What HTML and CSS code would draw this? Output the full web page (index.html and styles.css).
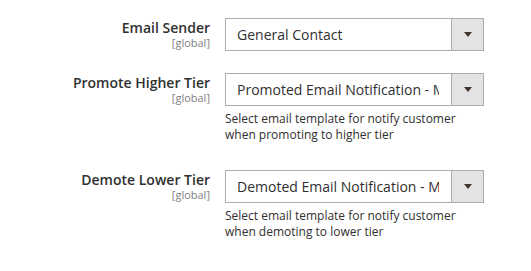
FILE: index.html
```html
<!DOCTYPE html>
<html>
<head>
<meta charset="utf-8">
<link rel="stylesheet" href="styles.css">
</head>
<body>
<div class="form">
  <div class="row">
    <div class="label">
      <span class="title">Email Sender</span>
      <span class="scope">[global]</span>
    </div>
    <div class="control">
      <div class="select"><span class="value">General Contact</span><span class="btn"><span class="arrow"></span></span></div>
    </div>
  </div>
  <div class="row">
    <div class="label">
      <span class="title">Promote Higher Tier</span>
      <span class="scope">[global]</span>
    </div>
    <div class="control">
      <div class="select"><span class="value">Promoted Email Notification - My Store</span><span class="btn"><span class="arrow"></span></span></div>
      <p class="note">Select email template for notify customer when promoting to higher tier</p>
    </div>
  </div>
  <div class="row">
    <div class="label">
      <span class="title">Demote Lower Tier</span>
      <span class="scope">[global]</span>
    </div>
    <div class="control">
      <div class="select"><span class="value">Demoted Email Notification - My Store</span><span class="btn"><span class="arrow"></span></span></div>
      <p class="note">Select email template for notify customer when demoting to lower tier</p>
    </div>
  </div>
</div>
</body>
</html>
```

FILE: styles.css
```css
html, body {
  margin: 0;
  padding: 0;
  background: #fff;
}
body {
  font-family: "Open Sans", "Liberation Sans", sans-serif;
  color: #303030;
}
.form {
  padding-top: 18px;
  display: flex;
  flex-direction: column;
}
.row {
  display: grid;
  grid-template-columns: 225px 259px;
  margin-bottom: 22px;
}
.row + .row {
  margin-bottom: 27px;
}
.label {
  display: flex;
  flex-direction: column;
  align-items: flex-end;
  padding-right: 15px;
  padding-top: 1px;
}
.title {
  font-size: 14px;
  font-weight: 600;
  line-height: 17px;
  color: #303030;
}
.scope {
  font-size: 11px;
  line-height: 14px;
  color: #808080;
}
.select {
  position: relative;
  height: 33px;
  box-sizing: border-box;
  border: 1px solid #adadad;
  background: #fff;
  display: flex;
  align-items: center;
  overflow: hidden;
}
.value {
  flex: 1;
  min-width: 0;
  padding-left: 11px;
  margin-right: 44px;
  font-size: 14px;
  line-height: 19px;
  white-space: nowrap;
  overflow: hidden;
  color: #303030;
}
.btn {
  position: absolute;
  top: 0;
  right: 0;
  bottom: 0;
  width: 31px;
  background: #e3e3e3;
  border-left: 1px solid #adadad;
  display: flex;
  align-items: center;
  justify-content: center;
}
.arrow {
  width: 0;
  height: 0;
  border-left: 4px solid transparent;
  border-right: 4px solid transparent;
  border-top: 5px solid #41362f;
}
.note {
  margin: 5px 0 0 0;
  font-size: 12px;
  line-height: 16px;
  color: #303030;
}
```
